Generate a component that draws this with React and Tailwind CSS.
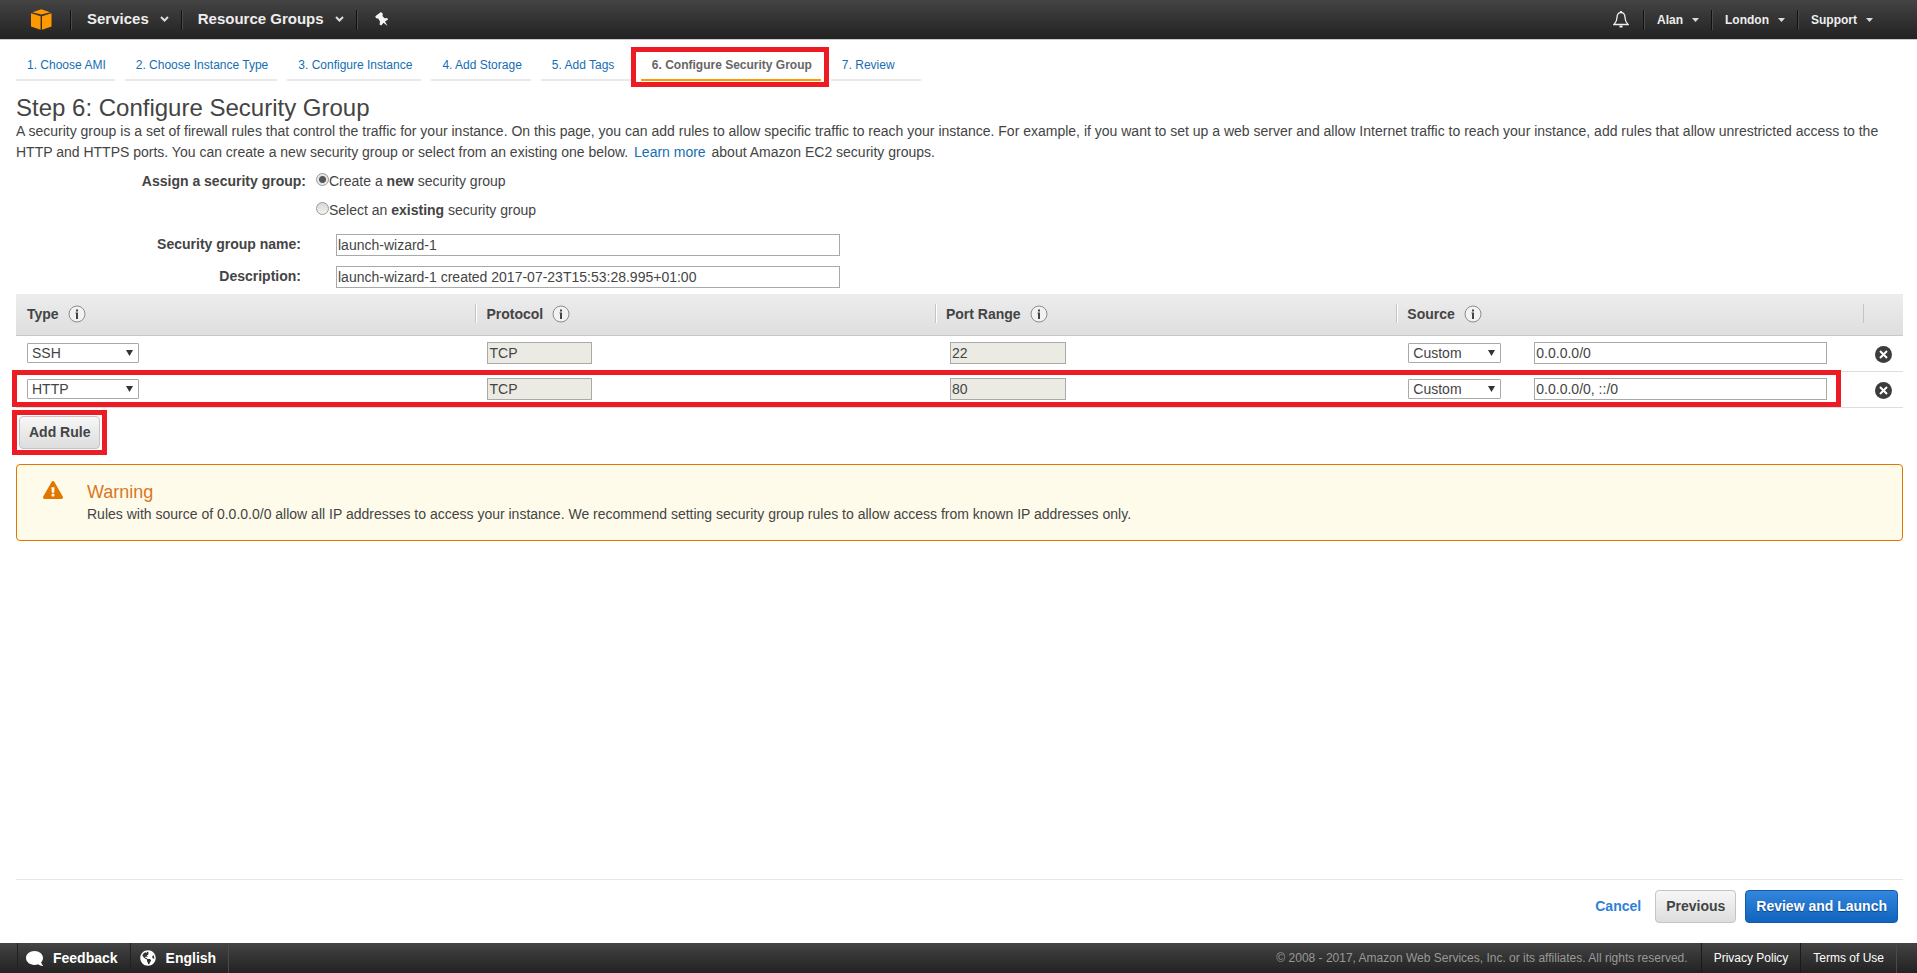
import { useState } from 'react';
import { FaComment, FaGlobeAmericas, FaExclamationTriangle } from 'react-icons/fa';

const STEPS = ['Choose AMI', 'Choose Instance Type', 'Configure Instance', 'Add Storage', 'Add Tags', 'Configure Security Group', 'Review'];
const ACTIVE_STEP = 5;

const TYPES = {
  SSH: { protocol: 'TCP', port: '22' },
  HTTP: { protocol: 'TCP', port: '80' },
  HTTPS: { protocol: 'TCP', port: '443' },
};

const fieldCls = 'h-[22px] border border-[#a9a9a9] px-px text-sm text-[#444]';
const greyBtn = 'h-[33px] rounded border border-[#c4c4c4] bg-linear-to-b from-[#f7f7f7] to-[#dddddd] pb-[2px] text-sm font-bold text-[#444]';

function Caret({ wide }) {
  return wide ? (
    <svg width="9" height="6" viewBox="0 0 9 6" fill="none" stroke="#ddd" strokeWidth="2"><path d="M1 1l3.5 3.5L8 1" /></svg>
  ) : (
    <svg width="7" height="4" viewBox="0 0 7 4" fill="#ddd"><path d="M0 0h7L3.500 4z" /></svg>
  );
}

function Separator() {
  return <span className="h-5 w-[2px] border-l border-[#111] bg-[#4a4a4a]" />;
}

function InfoIcon() {
  return (
    <svg width="18" height="18" viewBox="0 0 18 18">
      <circle cx="9" cy="9" r="8" fill="#f2f2f2" stroke="#8c8c8c" />
      <path d="M8 4.500h2v2H8zM7.500 7.500H10V14H8V8.500h-.5z" fill="#444" />
    </svg>
  );
}

function Select({ label, value, options, onChange, className }) {
  return (
    <div className={`relative ${className}`}>
      <select aria-label={label} value={value} onChange={e => onChange(e.target.value)} className="block h-5 w-full appearance-none rounded-[1px] border border-[#a9a9a9] bg-white pl-1 text-sm leading-4 text-[#444]">
        {options.map(o => <option key={o}>{o}</option>)}
      </select>
      <svg className="pointer-events-none absolute top-[7px] right-[6px]" width="7" height="6" viewBox="0 0 7 6" fill="#333"><path d="M0 0h7L3.500 6z" /></svg>
    </div>
  );
}

function TopNav() {
  return (
    <header className="flex h-10 items-center border-b border-[#ccc] bg-linear-to-b from-[#444] to-[#222] text-[#eee] [text-shadow:0_-1px_0_#000]">
      <a href="#home" aria-label="AWS home" className="mr-[18px] ml-[31px]">
        <svg width="21" height="21" viewBox="0 0 21 21" fill="#f90">
          <path d="M10.300 0.300L19.200 3.200L10.300 5.600L1.400 3.200z" />
          <path d="M0 4.200L9.600 7.200V20.700L0 17.600z" />
          <path d="M20.500 4.200L11 7.200V20.700l9.500-3.100z" />
        </svg>
      </a>
      <Separator />
      <button className="flex items-center gap-[11px] pr-3 pb-px pl-[15px] text-[15px] font-bold"><span>Services</span><Caret wide /></button>
      <Separator />
      <button className="flex items-center gap-[11px] pr-3 pb-px pl-[15px] text-[15px] font-bold"><span>Resource Groups</span><Caret wide /></button>
      <Separator />
      <button aria-label="Pin shortcuts" className="px-[17px]">
        <svg width="14" height="15" viewBox="0 0 14 15" fill="#f4f4f4">
          <path d="M6 0L7.800 1.700L7.500 4L9.500 6.200L12.200 6L13 7.500L10 9.500L12.500 14L8.500 10.800L6.200 13.500L4.600 12.600L5 9.500L3.200 6.500L1 6.300L0.300 4.300z" />
        </svg>
      </button>
      <nav className="mr-8 ml-auto flex items-center">
        <button aria-label="Notifications" className="px-[14px]">
          <svg width="16" height="17" viewBox="0 0 16 17" fill="none" stroke="#eee" strokeWidth="1.300">
            <path d="M8 1.500C5 1.500 4 4 4 6.500C4 10 3 11.500 1 13.500h14c-2-2-3-3.500-3-7C12 4 11 1.500 8 1.500z" />
            <path d="M7 1h2M6.500 15.500h3" strokeWidth="2" />
          </svg>
        </button>
        {['Alan', 'London', 'Support'].map(item => (
          <div key={item} className="flex items-center">
            <Separator />
            <button className="flex items-center gap-[9px] px-3 text-xs font-bold"><span>{item}</span><Caret /></button>
          </div>
        ))}
      </nav>
    </header>
  );
}

function StepTabs() {
  return (
    <nav className="flex gap-[10px] pt-[13px] text-xs">
      {STEPS.map((step, i) => (
        <div key={step} className="relative">
          <a href={`#step-${i + 1}`} className={`block h-7 min-w-[90px] border-b-2 pr-[9px] pl-[11px] leading-6 ${i === ACTIVE_STEP ? 'border-[#f90] font-bold text-[#666]' : 'border-[#eaeaea] text-[#146eb4]'}`}>{i + 1}. {step}</a>
          {i === ACTIVE_STEP && <span className="pointer-events-none absolute -top-[6px] -right-2 -bottom-[6px] -left-[10px] border-5 border-[#ed1c24]" />}
        </div>
      ))}
    </nav>
  );
}

function Radio({ id, checked, onChange, children }) {
  return (
    <div className="flex h-[29px] items-center">
      <input type="radio" id={id} name="group-mode" checked={checked} onChange={onChange} className="mb-1 size-[13px] appearance-none rounded-full border border-[#999] bg-linear-to-b from-[#d8d8d8] to-[#f2f2f2] checked:bg-[radial-gradient(circle,#555_0_3px,#e6e6e6_4px)]" />
      <label htmlFor={id} className="pb-px">{children}</label>
    </div>
  );
}

export default function App() {
  const [mode, setMode] = useState('new');
  const [name, setName] = useState('launch-wizard-1');
  const [description, setDescription] = useState('launch-wizard-1 created 2017-07-23T15:53:28.995+01:00');
  const [rules, setRules] = useState([
    { id: 1, type: 'SSH', mode: 'Custom', source: '0.0.0.0/0' },
    { id: 2, type: 'HTTP', mode: 'Custom', source: '0.0.0.0/0, ::/0' },
  ]);

  const update = (id, patch) => setRules(rules.map(r => (r.id === id ? { ...r, ...patch } : r)));
  const addRule = () => setRules([...rules, { id: Date.now(), type: 'SSH', mode: 'Custom', source: '' }]);

  return (
    <div className="flex min-h-screen flex-col bg-white font-['Liberation_Sans',Arial,sans-serif] text-sm text-[#444]">
      <TopNav />

      <main className="flex-1 pr-[14px] pl-4">
        <StepTabs />
        <h1 className="pt-[13px] text-2xl leading-[27px]">Step 6: Configure Security Group</h1>
        <p className="leading-[21px]">
          A security group is a set of firewall rules that control the traffic for your instance. On this page, you can add rules to allow specific traffic to reach your instance. For example, if you want to set up a web server and allow Internet traffic to reach your instance, add rules that allow unrestricted access to the HTTP and HTTPS ports. You can create a new security group or select from an existing one below. <a href="#learn" className="mx-[2px] text-[#146eb4]">Learn more</a> about Amazon EC2 security groups.
        </p>

        <div className="mt-1 flex">
          <span className="w-[290px] text-right leading-[29px] font-bold">Assign a security group:</span>
          <div className="ml-[10px]">
            <Radio id="mode-new" checked={mode === 'new'} onChange={() => setMode('new')}>Create a <b>new</b> security group</Radio>
            <Radio id="mode-existing" checked={mode === 'existing'} onChange={() => setMode('existing')}>Select an <b>existing</b> security group</Radio>
          </div>
        </div>
        <div className="mt-[9px] flex items-start">
          <label htmlFor="sg-name" className="w-[285px] text-right font-bold">Security group name:</label>
          <input id="sg-name" value={name} onChange={e => setName(e.target.value)} className={`ml-[35px] w-[504px] ${fieldCls}`} />
        </div>
        <div className="mt-[10px] flex items-start">
          <label htmlFor="sg-desc" className="w-[285px] text-right font-bold">Description:</label>
          <input id="sg-desc" value={description} onChange={e => setDescription(e.target.value)} className={`ml-[35px] w-[504px] ${fieldCls}`} />
        </div>

        <table className="mt-[6px] w-full table-fixed border-separate border-spacing-0">
          <thead>
            <tr className="h-[42px] bg-linear-to-b from-[#ededed] to-[#dedede] text-left">
              {['Type', 'Protocol', 'Port Range', 'Source'].map((h, i) => (
                <th key={h} className={`border-b border-[#c8c8c8] pb-[2px] ${i < 2 ? 'w-[24.35%]' : i === 2 ? 'w-[24.45%]' : ''}`}>
                  <div className={`flex h-[19px] items-center gap-[9px] ${i > 0 ? 'border-l border-[#c4c4c4] pl-[10px] shadow-[inset_1px_0_0_#fff]' : 'pl-[11px]'}`}>{h}<InfoIcon /></div>
                </th>
              ))}
              <th className="w-10 border-b border-[#c8c8c8] pb-[2px]"><div className="h-[19px] border-l border-[#c4c4c4]" /></th>
            </tr>
          </thead>
          <tbody>
            {rules.map((r, i) => (
              <tr key={r.id} className="relative h-9 [&>td]:border-b [&>td]:border-[#ddd] [&>td]:pb-[2px]">
                <td className="pl-[11px]">
                  <Select label="Type" value={r.type} options={Object.keys(TYPES)} onChange={v => update(r.id, { type: v })} className="w-[112px]" />
                  {i === 1 && <span className="pointer-events-none absolute -top-[2px] right-[62px] bottom-px -left-1 border-5 border-[#ed1c24]" />}
                </td>
                <td className="pl-3"><input aria-label="Protocol" disabled value={TYPES[r.type].protocol} className={`block w-[105px] bg-[#ebebe4] ${fieldCls}`} /></td>
                <td className="pl-[15px]"><input aria-label="Port range" disabled value={TYPES[r.type].port} className={`block w-[116px] bg-[#ebebe4] ${fieldCls}`} /></td>
                <td className="pr-9 pl-3">
                  <div className="flex items-center gap-[33px]">
                    <Select label="Source" value={r.mode} options={['Custom', 'Anywhere', 'My IP']} onChange={v => update(r.id, { mode: v })} className="w-[93px] shrink-0" />
                    <input aria-label="Source address" value={r.source} onChange={e => update(r.id, { source: e.target.value })} className={`min-w-0 flex-1 ${fieldCls}`} />
                  </div>
                </td>
                <td className="pt-[3px] pl-3">
                  <button aria-label="Delete rule" onClick={() => setRules(rules.filter(x => x.id !== r.id))} className="block">
                    <svg width="17" height="17" viewBox="0 0 17 17"><circle cx="8.500" cy="8.500" r="8.500" fill="#3c3c3c" /><path d="M5 5l7 7M12 5l-7 7" stroke="#fff" strokeWidth="2" /></svg>
                  </button>
                </td>
              </tr>
            ))}
          </tbody>
        </table>

        <div className="-ml-1 mt-[2px] w-fit border-5 border-[#ed1c24] px-[2px] py-px">
          <button onClick={addRule} className={`block px-[9px] ${greyBtn}`}>Add Rule</button>
        </div>

        <div className="mt-[9px] flex h-[77px] rounded border border-[#df7700] bg-[#fffbea] pl-[26px]">
          <FaExclamationTriangle size={20} className="mt-[15px] shrink-0 text-[#df7700]" />
          <div className="pt-[15px] pl-6">
            <h2 className="text-lg leading-6 text-[#d9771d]">Warning</h2>
            <p className="leading-5">Rules with source of 0.0.0.0/0 allow all IP addresses to access your instance. We recommend setting security group rules to allow access from known IP addresses only.</p>
          </div>
        </div>
      </main>

      <div className="mr-[14px] ml-4 flex h-16 items-start justify-end border-t border-[#e6e6e6] pt-[10px] pr-[5px]">
        <a href="#cancel" className="mr-[14px] leading-8 font-bold text-[#2f80d8]">Cancel</a>
        <button className={`mr-[9px] px-[10px] ${greyBtn}`}>Previous</button>
        <button className="h-[33px] rounded border border-[#1458a8] bg-linear-to-b from-[#3286dc] to-[#1064bf] px-[10px] pb-[2px] text-sm font-bold text-white [text-shadow:0_1px_1px_#0a4080]">Review and Launch</button>
      </div>

      <footer className="flex h-[30px] items-center bg-linear-to-b from-[#444] to-[#222] pr-5 pl-[17px] text-xs text-white">
        <button className="flex h-full items-center gap-[10px] border-x border-x-[#222] pr-3 pl-2 text-sm font-bold"><FaComment size={17} className="-scale-x-100" />Feedback</button>
        <button className="flex h-full items-center gap-[10px] border-r border-[#4a4a4a] pr-3 pl-[9px] text-sm font-bold"><FaGlobeAmericas size={16} />English</button>
        <span className="mr-[13px] ml-auto text-[#999]">© 2008 - 2017, Amazon Web Services, Inc. or its affiliates. All rights reserved.</span>
        <a href="#privacy" className="h-full border-l border-[#1a1a1a] px-3 leading-[30px]">Privacy Policy</a>
        <a href="#terms" className="h-full border-x border-l-[#1a1a1a] border-r-[#4a4a4a] px-3 leading-[30px]">Terms of Use</a>
      </footer>
    </div>
  );
}
